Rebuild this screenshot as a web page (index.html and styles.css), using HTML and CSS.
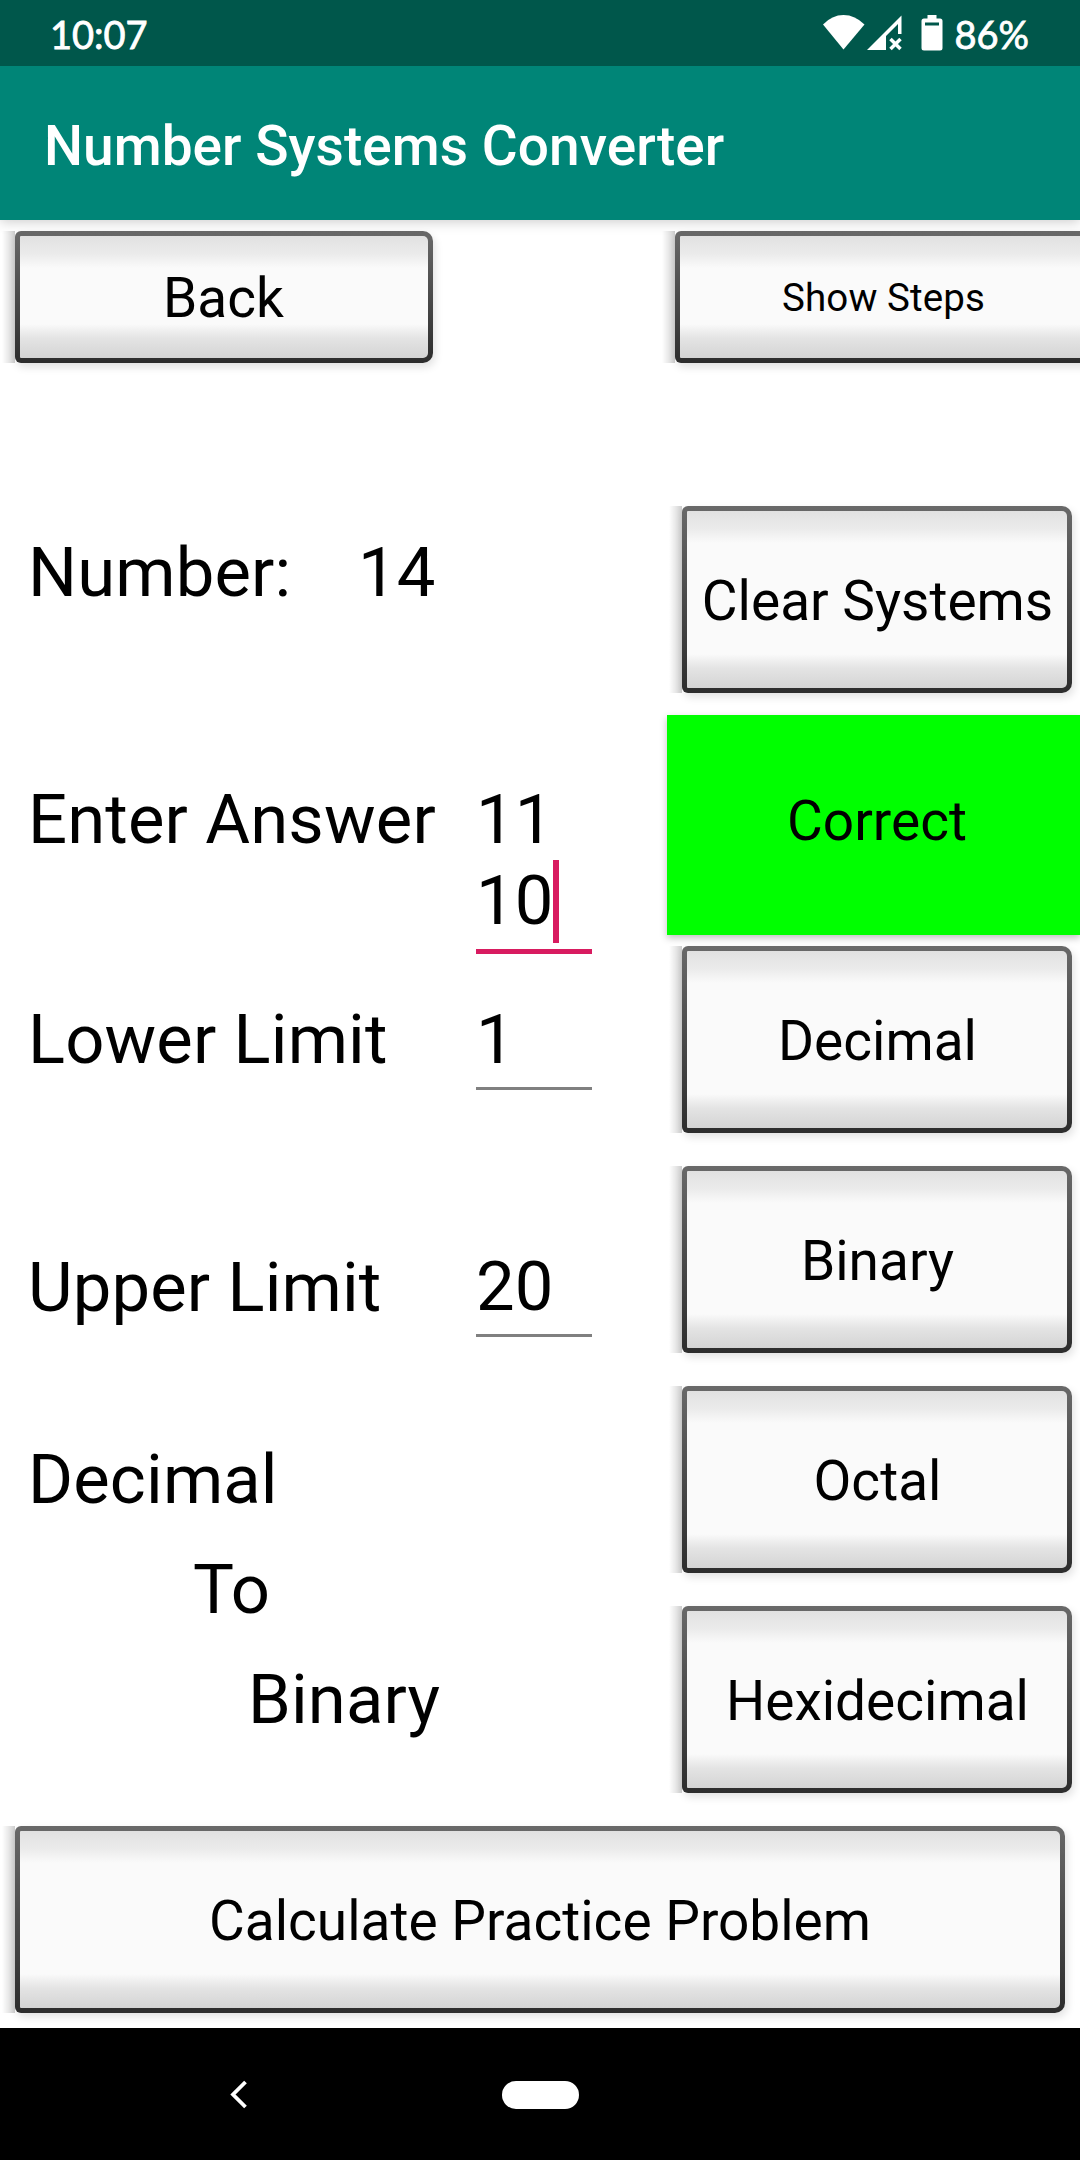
FILE: index.html
```html
<!DOCTYPE html>
<html lang="en">
<head>
<meta charset="utf-8">
<title>Number Systems Converter</title>
<link rel="stylesheet" href="styles.css">
</head>
<body>
<header class="status">
  <span class="clock">10:07</span>
  <div class="status-icons">
    <svg class="wifi" width="42" height="36" viewBox="0 0 42 36"><path fill="#fff" d="M0 9.500Q9 0 20.500 0T41.500 9.500L20.500 34.500Z"/></svg>
    <svg class="signal" width="36" height="36" viewBox="0 0 36 36"><path fill="#fff" fill-rule="evenodd" d="M0 35L34.500 .5V19H31V9L19 21V35Z"/><path stroke="#fff" stroke-width="3.500" d="M23.500 24L33.500 34M33.500 24L23.500 34"/></svg>
    <svg class="battery" width="22" height="36" viewBox="0 0 22 36"><path fill="#fff" fill-rule="evenodd" d="M6.500 0H15.500V3.500H19Q21.500 3.500 21.500 6V33Q21.500 35.500 19 35.500H3Q.5 35.500 .5 33V6Q.5 3.500 3 3.500H6.500ZM4 7.500V10.500H18V7.500Z"/></svg>
    <span class="percent">86%</span>
  </div>
</header>
<div class="app-bar"><h1>Number Systems Converter</h1></div>
<main class="screen">
  <div class="top-row">
    <button class="btn back">Back</button>
    <button class="btn steps">Show Steps</button>
  </div>
  <div class="columns">
    <section class="form">
      <div class="row number"><span class="label">Number:</span><span>14</span></div>
      <div class="row answer"><span class="label">Enter Answer</span><div class="field focused">11<br>10<i class="cursor"></i></div></div>
      <div class="row lower"><span class="label">Lower Limit</span><div class="field">1</div></div>
      <div class="row upper"><span class="label">Upper Limit</span><div class="field">20</div></div>
      <div class="conversion"><p>Decimal</p><p class="to">To</p><p class="target">Binary</p></div>
    </section>
    <section class="actions">
      <button class="btn">Clear Systems</button>
      <div class="result">Correct</div>
      <button class="btn">Decimal</button>
      <button class="btn">Binary</button>
      <button class="btn">Octal</button>
      <button class="btn">Hexidecimal</button>
    </section>
  </div>
  <button class="btn calculate">Calculate Practice Problem</button>
</main>
<nav class="nav">
  <svg class="nav-back" width="20" height="30" viewBox="0 0 20 30"><path fill="none" stroke="#fff" stroke-width="3.800" d="M16.500 2L4 14.500L16.500 27"/></svg>
  <span class="home"></span>
</nav>
</body>
</html>
```
FILE: styles.css
```css
* { box-sizing: border-box; margin: 0; padding: 0; }
body { width: 1080px; height: 2160px; display: flex; flex-direction: column; overflow: hidden; background: #fff; color: #000; font-family: Roboto, sans-serif; }
.status { position: relative; z-index: 2; height: 66px; flex: none; background: #00574b; color: #fff; display: flex; justify-content: space-between; padding: 0 51px 0 50px; font: 400 38px/69px "Lato", sans-serif; -webkit-text-stroke: .8px #fff; }
.status-icons { display: flex; align-items: flex-start; }
.status-icons svg { margin-top: 15px; }
.signal { margin-left: 2px; }
.battery { margin-left: 18px; }
.percent { margin-left: 11px; }
.app-bar { height: 154px; flex: none; background: #008577; color: #fff; padding: 0 44px; position: relative; z-index: 1; box-shadow: 0 2px 12px rgba(0,0,0,.2); }
.app-bar h1 { font-size: 55px; font-weight: 500; line-height: 160px; letter-spacing: .04px; }
.screen { height: 1808px; flex: none; overflow: hidden; display: flex; flex-direction: column; }
.top-row { height: 275px; flex: none; display: flex; align-items: flex-start; padding: 11px 0 0 15px; }
.btn { position: relative; display: block; flex: none; font: 400 55px/1 Roboto, sans-serif; color: #000; white-space: nowrap; padding-top: 3px; border: 5px solid transparent; border-radius: 6px 10px 10px 6px; background: linear-gradient(#e1e1e1 0, #ebebeb 18px, #fafafa 32px, #fafafa calc(100% - 34px), #e4e4e4 calc(100% - 20px), #d4d4d4 100%) padding-box, linear-gradient(#696969, #4a4a4a 50%, #2d2d2d) border-box; box-shadow: 2px 4px 8px rgba(0,0,0,.12); }
/* hard-edged shade along the left side of the button */
.btn::before { content: ""; position: absolute; top: -5px; bottom: -5px; left: -18px; width: 13px; background: linear-gradient(to left, rgba(0,0,0,.2), rgba(0,0,0,.09) 50%, transparent); }
.back { width: 418px; height: 132px; padding-right: 1px; }
.steps { width: 417px; height: 132px; font-size: 38.5px; margin-left: 242px; letter-spacing: .1px; }
.columns { display: grid; grid-template-columns: 667px 413px; height: 1320px; flex: none; }
.form { font-size: 68.75px; line-height: 81px; padding: 37px 0 0 28px; }
.row { display: flex; align-items: flex-start; }
.label { width: 448px; flex: none; white-space: nowrap; letter-spacing: .15px; }
.number { height: 247px; }
.number .label { width: 330px; }
.answer { height: 220px; }
.lower { height: 247px; }
.upper { height: 193px; }
.upper .label { padding-top: 1px; }
.field { width: 116px; height: 91px; border-bottom: 3px solid #808080; }
.focused { height: 175px; border-bottom: 5px solid #d81b60; white-space: nowrap; }
.cursor { display: inline-block; width: 6px; height: 83px; margin-bottom: -83px; vertical-align: top; background: #d81b60; }
.conversion p { height: 110px; letter-spacing: .15px; }
.to { padding-left: 165px; }
.target { padding-left: 220px; }
.actions { display: grid; grid-template-rows: repeat(6, 220px); }
.actions .btn { width: 390px; height: 187px; margin: 11px 0 0 15px; padding-left: 1px; }
.result { background: #0f0; font-size: 55px; line-height: 212px; text-align: center; padding-left: 7px; box-shadow: 0 3px 7px rgba(0,0,0,.25); }
.calculate { width: 1050px; height: 187px; margin: 11px 15px; }
.nav { height: 132px; flex: none; background: #000; display: flex; align-items: center; padding: 2px 0 0 229px; }
.home { width: 77px; height: 28px; border-radius: 14px; background: #fff; margin-left: 253px; }
```
